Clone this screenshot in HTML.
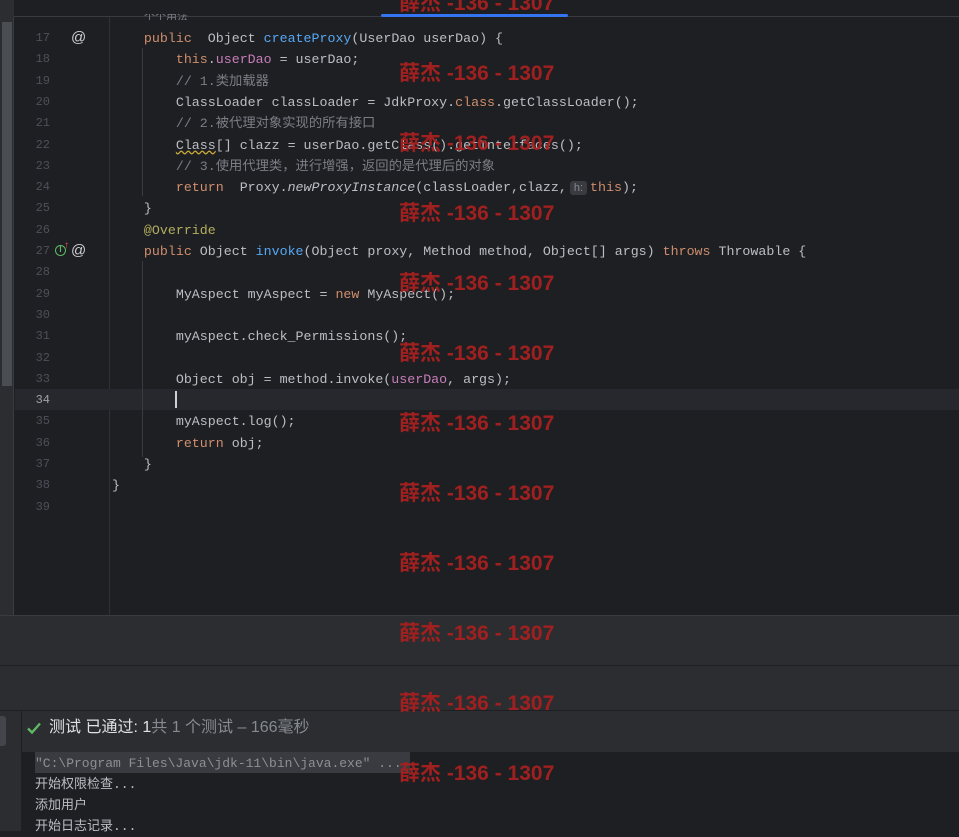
<!DOCTYPE html>
<html><head><meta charset="utf-8"><style>
*{margin:0;padding:0;box-sizing:border-box}
body{width:959px;height:831px;overflow:hidden;background:#1e1f22;position:relative;font-family:"Liberation Mono","Noto Sans CJK SC",monospace;font-size:13.3px;color:#bcbec4}
.abs{position:absolute}
.ln{position:absolute;left:0;width:50px;text-align:right;color:#4b5059;font-size:12px;white-space:pre}
.cl{position:absolute;left:112px;white-space:pre;height:21px;line-height:21px}
.k{color:#cf8e6d}.f{color:#56a8f5}.p{color:#c77dbb}.c{color:#7a7e85}.a{color:#b3ae60}.i{font-style:italic}
.wm{position:absolute;left:399px;color:#a8201f;font-family:"Liberation Sans","Noto Sans CJK SC",sans-serif;font-weight:bold;font-size:21px;line-height:22px;white-space:pre;opacity:.95}
</style></head><body>
<div class="abs" style="left:0;top:0;width:959px;height:17px;background:#1e1f22;border-bottom:1px solid #393b40"></div>
<div class="abs" style="left:0;top:0;width:14px;height:17px;background:#2b2d30"></div>
<div class="abs" style="left:381px;top:14px;width:187px;height:3px;background:#3574f0;border-radius:2px"></div>
<div class="abs" style="left:0;top:17px;width:14px;height:598px;background:#2b2d30;border-right:1px solid #393b40"></div>
<div class="abs" style="left:2px;top:22px;width:10px;height:364px;background:#4a4d52"></div>
<div class="abs" style="left:109px;top:17px;width:1px;height:598px;background:#2f3135"></div>
<div class="abs" style="left:15px;top:389px;width:944px;height:21px;background:#26282e"></div>
<div class="abs" style="left:142px;top:48px;width:1px;height:148px;background:#393b40"></div>
<div class="abs" style="left:142px;top:261px;width:1px;height:196px;background:#393b40"></div>
<div class="abs" style="left:175px;top:391px;width:2px;height:17px;background:#ced0d6"></div>
<div class="abs c" style="left:144px;top:14px;font-size:11px;line-height:8px;height:6px;overflow:hidden">个个用法</div>
<div id="code"></div>
<div class="abs" style="left:71px;top:29px;color:#ced0d6;font-size:15px;font-family:'Liberation Sans',sans-serif">@</div>
<div class="abs" style="left:71px;top:242px;color:#ced0d6;font-size:15px;font-family:'Liberation Sans',sans-serif">@</div>
<div class="abs" style="left:55px;top:245px;width:11px;height:11px;border:1.5px solid #5fb865;border-radius:50%;color:#5fb865;font-size:8px;line-height:8px;text-align:center;font-family:'Liberation Sans',sans-serif;font-weight:bold">I</div>
<div class="abs" style="left:64px;top:240px;color:#e55765;font-size:10px;font-family:'Liberation Sans',sans-serif">↑</div>
<div class="abs" style="left:0;top:615px;width:959px;height:51px;background:#2b2d30;border-top:1px solid #393b40;border-bottom:1px solid #1e1f22"></div>
<div class="abs" style="left:0;top:666px;width:959px;height:45px;background:#2b2d30;border-bottom:1px solid #1e1f22"></div>
<div class="abs" style="left:0;top:711px;width:22px;height:120px;background:#2b2d30;border-right:1px solid #1e1f22"></div>
<div class="abs" style="left:0;top:716px;width:6px;height:30px;background:#43454a;border-radius:0 3px 3px 0"></div>
<div class="abs" style="left:22px;top:711px;width:937px;height:41px;background:#2b2d30"></div>
<svg class="abs" style="left:26px;top:720px" width="16" height="16" viewBox="0 0 16 16"><path d="M2 8.5 L6 12.5 L14 3.5" fill="none" stroke="#5fb865" stroke-width="2.4"/></svg>
<div class="abs" style="left:49px;top:717px;font-family:'Liberation Sans','Noto Sans CJK SC',sans-serif;font-size:16px;line-height:22px;color:#dfe1e5;white-space:pre">测试 已通过: 1<span style="color:#868a91">共 1 个测试 – 166毫秒</span></div>
<div class="abs" style="left:35px;top:752px;width:375px;height:21px;background:#393b40"></div>
<div class="abs" style="left:35px;top:753px;white-space:pre;line-height:21px;font-size:13px"><span style="color:#8c8f94">"C:\Program Files\Java\jdk-11\bin\java.exe" ...</span>
开始权限检查...
添加用户
开始日志记录...</div>
<div id="wm"></div>
<script>
var L={
17:'    <span class="k">public</span>  Object <span class="f">createProxy</span>(UserDao userDao) {',
18:'        <span class="k">this</span>.<span class="p">userDao</span> = userDao;',
19:'        <span class="c">// 1.类加载器</span>',
20:'        ClassLoader classLoader = JdkProxy.<span class="k">class</span>.getClassLoader();',
21:'        <span class="c">// 2.被代理对象实现的所有接口</span>',
22:'        <span style="text-decoration:underline wavy #c9a83a">Class</span>[] clazz = userDao.getClass().getInterfaces();',
23:'        <span class="c">// 3.使用代理类，进行增强，返回的是代理后的对象</span>',
24:'        <span class="k">return</span>  Proxy.<span class="i">newProxyInstance</span>(classLoader,clazz,<span style="background:#393b40;color:#868a91;border-radius:3px;font-family:Liberation Sans,sans-serif;font-size:11px;padding:1px 4px;margin:0 3px">h:</span><span class="k">this</span>);',
25:'    }',
26:'    <span class="a">@Override</span>',
27:'    <span class="k">public</span> Object <span class="f">invoke</span>(Object proxy, Method method, Object[] args) <span class="k">throws</span> Throwable {',
28:'',
29:'        MyAspect myAspect = <span class="k">new</span> MyAspect();',
30:'',
31:'        myAspect.check_Permissions();',
32:'',
33:'        Object obj = method.invoke(<span class="p">userDao</span>, args);',
34:'',
35:'        myAspect.log();',
36:'        <span class="k">return</span> obj;',
37:'    }',
38:'}',
39:''};
var h='';
for(var n=17;n<=39;n++){var t=28+(n-17)*21.3;
h+='<div class="ln" style="top:'+(t+3)+'px;'+(n==34?'color:#a1a3ab':'')+'">'+n+'</div>';
h+='<div class="cl" style="top:'+t+'px">'+L[n]+'</div>';}
document.getElementById('code').innerHTML=h;
var w='';for(var j=0;j<12;j++){w+='<div class="wm" style="top:'+(-7+j*70)+'px">薛杰 -136 - 1307</div>';}
document.getElementById('wm').innerHTML=w;
</script>
</body></html>
